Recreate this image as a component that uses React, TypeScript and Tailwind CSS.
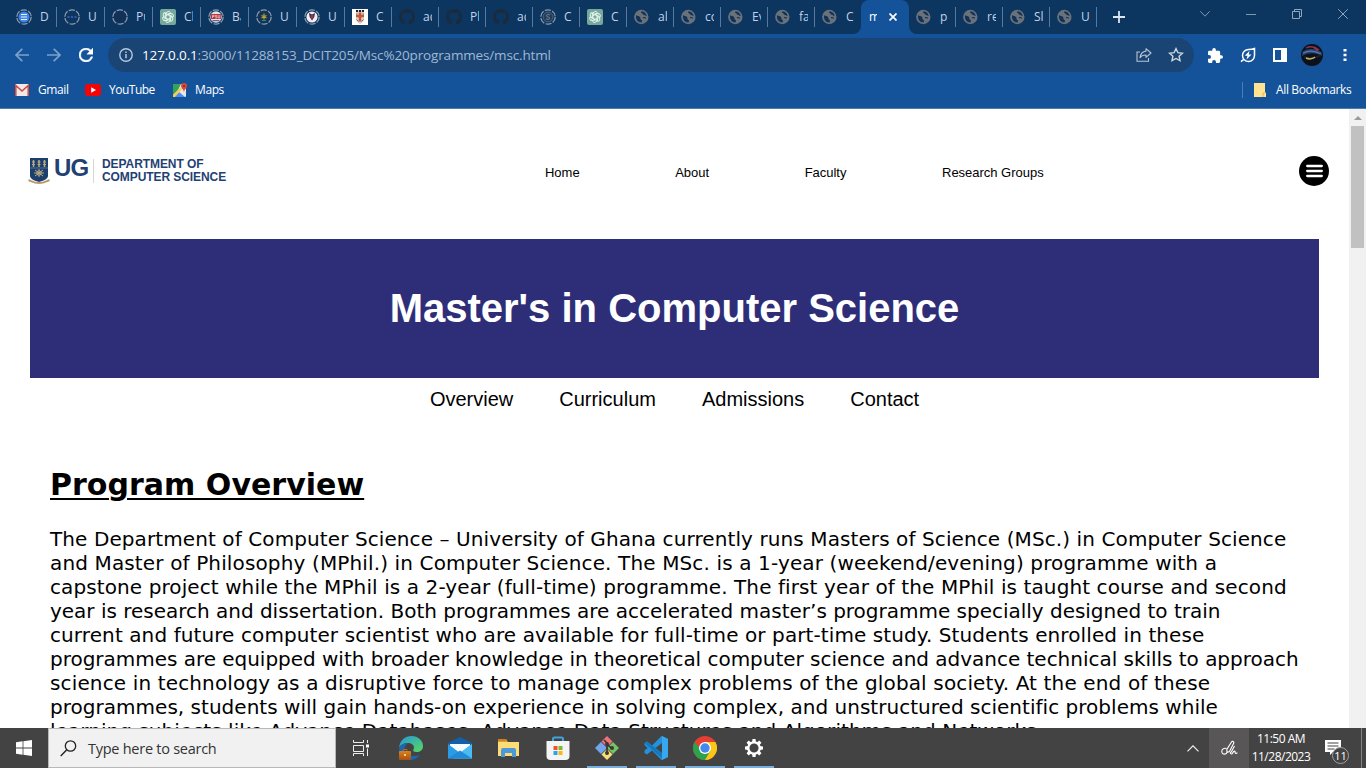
import React from 'react';

type IconKind = 'doc' | 'dots' | 'ring' | 'gpt' | 'psu' | 'crest' | 'bird' | 'shield' | 'github' | 'coin' | 'globe';

const Ring = () => (
  <circle cx="8" cy="8" r="7.2" fill="none" stroke="#8d9cad" strokeWidth="1.3" strokeDasharray="6.2 1.4" />
);

function TabIcon({ kind }: { kind: IconKind }) {
  return (
    <svg viewBox="0 0 16 16" className="h-4 w-4 shrink-0">
      {kind === 'doc' && (
        <g>
          <Ring />
          <circle cx="8" cy="8" r="5.5" fill="#3f86e8" />
          <path d="M5 5.500h6M5 8h6M5 10.500h6" stroke="#e8f1ff" strokeWidth="1.200" />
        </g>
      )}
      {kind === 'dots' && (
        <g>
          <Ring />
          <path d="M3.5 8h2M7 8h2M10.5 8h2" stroke="#3f67c4" strokeWidth="1.6" />
        </g>
      )}
      {kind === 'ring' && (
        <g>
          <circle cx="8" cy="8" r="6" fill="#123157" />
          <Ring />
        </g>
      )}
      {kind === 'gpt' && (
        <g>
          <rect width="16" height="16" rx="2" fill="#75a99c" />
          <g fill="none" stroke="#e6f5ef" strokeWidth="0.9">
            {[0, 60, 120, 180, 240, 300].map((a) => (
              <path key={a} transform={`rotate(${a} 8 8)`} d="M6 8.9V4.9a2.5 2.5 0 0 1 4.6-1.3M6 6.1l3.6-2.1 2 1.2" />
            ))}
          </g>
        </g>
      )}
      {kind === 'psu' && (
        <g>
          <circle cx="8" cy="8" r="5.8" fill="#dfe3ea" />
          <rect x="2.8" y="5" width="10.4" height="5" rx="1" fill="#b3303c" />
          <path d="M4.5 9V6.300h1.500v1.300H4.600M9 6.400H7.300v1.200h1.500V9H7.100M10.200 6v3h1.600V6" fill="none" stroke="#f5d5d8" strokeWidth="0.7" />
          <path d="M4.5 11.7h7" stroke="#3c4f76" strokeWidth="1" />
          <Ring />
        </g>
      )}
      {kind === 'crest' && (
        <g>
          <circle cx="8" cy="8" r="6" fill="#153455" />
          <path d="M8 4.500v6M5.500 6.500l5 2.500M10.500 6.500l-5 2.500" stroke="#b4a23e" strokeWidth="1.200" />
          <path d="M6 11.500h4" stroke="#3b8e62" strokeWidth="1" />
          <Ring />
        </g>
      )}
      {kind === 'bird' && (
        <g>
          <circle cx="8" cy="8" r="5.6" fill="#edf0f4" />
          <path d="M5 4l3 1.6L11 4l-.7 4L8 11.6 5.7 8z" fill="#26314f" />
          <path d="M6.6 6.4L9.4 5v4.2L7 10z" fill="#b62c3b" />
          <Ring />
        </g>
      )}
      {kind === 'shield' && (
        <g>
          <rect width="16" height="16" fill="#fff" />
          <path d="M4 1h8v9c0 2.500-2 4-4 5-2-1-4-2.500-4-5z" fill="#d9d4d0" />
          <path d="M4 1h2v2H4zM7 1h2v2H7zM10 1h2v2h-2z" fill="#1f2027" />
          <path d="M8 3.500v9M4 7h8" stroke="#c9562f" strokeWidth="2.600" />
          <path d="M4 5h1.500M10.500 5H12M4.500 10.500l2 2M11.500 10.500l-2 2" stroke="#6a6a74" strokeWidth="1" />
        </g>
      )}
      {kind === 'github' && (
        <path fill="#1b2b3e" d="M8 0C3.580 0 0 3.580 0 8c0 3.540 2.290 6.530 5.470 7.590.4.070.550-.170.550-.380v-1.490c-2.230.480-2.690-.950-2.690-.950-.360-.920-.890-1.170-.890-1.170-.730-.500.060-.490.060-.490.800.060 1.230.820 1.230.820.720 1.230 1.870.870 2.330.670.070-.520.280-.870.510-1.070-1.780-.200-3.640-.890-3.640-3.950 0-.870.310-1.590.820-2.150-.080-.200-.360-1.020.080-2.120 0 0 .670-.210 2.200.820a7.700 7.700 0 0 1 4 0c1.530-1.040 2.200-.820 2.200-.820.440 1.100.160 1.920.080 2.120.510.560.820 1.270.820 2.150 0 3.070-1.870 3.750-3.650 3.950.290.250.540.730.540 1.480v2.200c0 .210.150.460.550.380A8 8 0 0 0 16 8c0-4.420-3.580-8-8-8z" />
      )}
      {kind === 'coin' && (
        <g>
          <Ring />
          <circle cx="8" cy="8" r="4.900" fill="#243c59" stroke="#52687f" strokeWidth="0.900" />
          <path d="M10 6.200c-.700-1-3.600-1-3.600.600 0 1.500 3.300.800 3.300 2.400 0 1.600-3.100 1.400-3.800.300" fill="none" stroke="#6f8396" strokeWidth="1" />
        </g>
      )}
      {kind === 'globe' && (
        <g>
          <circle cx="7.300" cy="8" r="7.200" fill="#69727b" />
          <path d="M2 6.300c1.500 1 2.800.300 4 1.600 1 1-.200 2 .900 2.700 1.400.800 1.200 1.700.600 2.800-3.200.200-5.500-2.300-5.500-5.300zM7.700 2.200c-1 .900-.800 1.800.300 2 1.100.300.500 1.500 1.700 1.600 1.300.100 1.500 1.200 3 1.200-.400-2.500-2.400-4.600-5-4.800z" fill="#133257" />
          <path d="M9 8.700c1.300-.600 2 .500 3 .300" fill="none" stroke="#133257" strokeWidth="1.200" />
        </g>
      )}
    </svg>
  );
}

const leftTabs: [IconKind, string][] = [
  ['doc', 'D'], ['dots', 'U'], ['ring', 'Pu'], ['gpt', 'Cl'], ['psu', 'Ba'], ['crest', 'U'], ['bird', 'U'],
];
const midTabs: [IconKind, string][] = [
  ['shield', 'C'], ['github', 'ad'], ['github', 'Pl'], ['github', 'ad'], ['coin', 'C'], ['gpt', 'C'],
  ['globe', 'al'], ['globe', 'co'], ['globe', 'Ev'], ['globe', 'fa'], ['globe', 'C'],
];
const rightTabs: [IconKind, string][] = [['globe', 'p'], ['globe', 're'], ['globe', 'Sl'], ['globe', 'U']];

function Tab({ kind, label, wide, first }: { kind: IconKind; label: string; wide?: boolean; first?: boolean }) {
  return (
    <div className={`${wide ? 'w-12' : 'w-[47px]'} flex h-[34px] shrink-0 items-center`}>
      <div className={`h-5 w-px shrink-0 ${first ? '' : 'bg-[#56799d]'}`} />
      <div className="ml-[7px] flex items-center gap-2">
        <TabIcon kind={kind} />
        <span className="w-[9px] overflow-hidden whitespace-nowrap text-[12px] leading-4 text-[#c3d3e6]">{label}</span>
      </div>
    </div>
  );
}

function TabStrip() {
  return (
    <div className="flex h-[34px] shrink-0 bg-[#0c3560] pl-2">
      {leftTabs.map(([k, l], i) => <Tab key={i} kind={k} label={l} wide first={i === 0} />)}
      {midTabs.map(([k, l], i) => <Tab key={i} kind={k} label={l} />)}
      <div className="relative -mr-px flex h-[34px] w-12 shrink-0 items-center rounded-t-lg bg-[#14539a] pl-2">
        <span className="w-[8px] overflow-hidden whitespace-nowrap text-[12px] leading-4 text-white">ms</span>
        <svg viewBox="0 0 8 8" className="ml-3 h-2 w-2"><path d="M.5.5l7 7M7.500.5l-7 7" stroke="#fff" strokeWidth="1.700" /></svg>
        <svg viewBox="0 0 8 8" className="absolute bottom-0 -left-2 h-2 w-2"><path d="M8 0v8H0a8 8 0 0 0 8-8z" fill="#14539a" /></svg>
        <svg viewBox="0 0 8 8" className="absolute -right-2 bottom-0 h-2 w-2"><path d="M0 0v8h8a8 8 0 0 1-8-8z" fill="#14539a" /></svg>
      </div>
      {rightTabs.map(([k, l], i) => <Tab key={i} kind={k} label={l} first={i === 0} />)}
      <div className="mt-[7px] h-5 w-px bg-[#56799d]" />
      <svg viewBox="0 0 12 12" className="mt-[11px] ml-4 h-3 w-3"><path d="M6 0v12M0 6h12" stroke="#dbe6f1" strokeWidth="1.800" /></svg>
      <div className="ml-auto flex h-7 items-center pr-[18px]">
        <svg viewBox="0 0 10 6" className="mr-[36px] h-1.5 w-2.5"><path d="M.3.3L5 5.200 9.700.3" fill="none" stroke="#7f98b2" /></svg>
        <svg viewBox="0 0 10 10" className="mr-[36px] h-2.5 w-2.5"><path d="M0 5.500h10" stroke="#7f98b2" /></svg>
        <svg viewBox="0 0 10 10" className="mr-[36px] h-2.5 w-2.5"><path d="M.5 2.500h7v7h-7zM2.500 2.500v-2h7v7h-2" fill="none" stroke="#8fa5bb" /></svg>
        <svg viewBox="0 0 10 10" className="h-2.5 w-2.5"><path d="M.2.2l9.600 9.600M9.800.2L.2 9.800" stroke="#8fa5bb" /></svg>
      </div>
    </div>
  );
}

function Toolbar() {
  return (
    <div className="flex h-[42px] shrink-0 items-center pl-[15px]">
      <svg viewBox="0 0 14 14" className="h-3.5 w-3.5"><path d="M14 7H1M7.300.8L1 7l6.300 6.200" fill="none" stroke="#7ba1cb" strokeWidth="1.700" /></svg>
      <svg viewBox="0 0 14 14" className="ml-[18px] h-3.5 w-3.5"><path d="M0 7h13M6.700.8L13 7l-6.300 6.200" fill="none" stroke="#7ba1cb" strokeWidth="1.700" /></svg>
      <svg viewBox="4 4 16 16" className="ml-[18px] h-3.5 w-3.5"><path fill="#fff" stroke="#fff" strokeWidth=".5" d="M17.650 6.350A7.960 7.960 0 0 0 12 4a8 8 0 1 0 7.730 10h-2.080A6 6 0 1 1 12 6c1.660 0 3.140.690 4.220 1.780L13 11h7V4z" /></svg>
      <div className="ml-[15px] flex h-[34px] w-[1086px] items-center rounded-full bg-[#1a4473] pr-[10px] pl-[11px]">
        <svg viewBox="0 0 14 14" className="h-3.5 w-3.5"><circle cx="7" cy="7" r="6.200" fill="none" stroke="#b7c8db" strokeWidth="1.400" /><path d="M7 6v4.300M7 3.600v1.500" stroke="#b7c8db" strokeWidth="1.500" /></svg>
        <span className="ml-[9px] text-[13.5px] tracking-[-0.15px] text-[#9fb9d6]"><span className="text-white">127.0.0.1</span>:3000/11288153_DCIT205/Msc%20programmes/msc.html</span>
        <svg viewBox="0 0 16 16" className="ml-auto h-4 w-4"><path d="M4 5H1v9.300h11.500V11" fill="none" stroke="#b7c5d4" strokeWidth="1.100" /><path d="M10 1.700L15 6l-5 4.300V8c-2.800 0-4.700.700-6 2.700C4.500 7 6.500 4.500 10 4.100z" fill="none" stroke="#b7c5d4" strokeWidth="1.100" strokeLinejoin="round" /></svg>
        <svg viewBox="0 0 16 16" className="ml-4 h-4 w-4"><path d="M8 1.600l1.950 4.100 4.500.500-3.350 3.050.9 4.450L8 11.500l-4 2.200.9-4.450L1.550 6.200l4.500-.5z" fill="none" stroke="#cbd5df" strokeWidth="1.400" /></svg>
      </div>
      <svg viewBox="2 1 21 21" className="ml-[14px] h-[15px] w-[15px]"><path fill="#fff" d="M20.500 11H19V7a2 2 0 0 0-2-2h-4V3.500a2.500 2.500 0 0 0-5 0V5H4a2 2 0 0 0-2 2v3.800h1.500a2.700 2.700 0 0 1 0 5.400H2V20a2 2 0 0 0 2 2h3.800v-1.500a2.700 2.700 0 0 1 5.400 0V22H17a2 2 0 0 0 2-2v-4h1.500a2.500 2.500 0 0 0 0-5z" /></svg>
      <svg viewBox="0 0 16 16" className="ml-[17px] h-4 w-4"><path d="M14.500 1.500v7a6 6 0 1 1-6-6c2.500 0 4-.2 6-1zM1 14.700l2.500-2" fill="none" stroke="#fff" strokeWidth="1.500" /><path d="M9.500 3.800L4.800 8.700h2.700l-1 3.800L11.500 7.400H8.700z" fill="#fff" /></svg>
      <svg viewBox="0 0 14 14" className="ml-[17px] h-3.5 w-3.5"><path d="M0 0h14v14H0zM2 2v10h6V2z" fill="#fff" fillRule="evenodd" /></svg>
      <svg viewBox="0 0 22 22" className="ml-[14px] h-[22px] w-[22px]">
        <circle cx="11" cy="11" r="11" fill="#0d1119" />
        <path d="M1.500 8c4-4 12-4 19 0l.5 4c-6-3-12-4-20 0z" fill="#27446f" />
        <path d="M5 4c4-2 8-2 13 2M12 3l5 4" stroke="#8f3350" fill="none" strokeWidth="1.300" />
        <path d="M2 9c6-3 11-3 18 1" fill="none" stroke="#4d78b8" strokeWidth="1.200" />
        <path d="M3 13c5 2 12 1 17-2" fill="none" stroke="#1c2230" strokeWidth="2" />
        <path d="M5 14c3 1.500 7 1 9-1" fill="none" stroke="#b8b46a" strokeWidth="1.500" />
      </svg>
      <svg viewBox="0 0 4 14" className="ml-[20px] h-3.5 w-1"><path d="M.5 1h3v2.500h-3zM.5 5.800h3v2.500h-3zM.5 10.600h3v2.500h-3z" fill="#fff" /></svg>
    </div>
  );
}

function Bookmarks() {
  return (
    <div className="flex h-8 shrink-0 items-center pr-[15px] pb-1 pl-[15px] text-[12px] text-white">
      <svg viewBox="0 0 14 12" className="h-3 w-3.5"><rect width="14" height="12" rx="1" fill="#f1e9e8" /><path d="M.8 12V1.500L7 7l6.200-5.500V12" fill="none" stroke="#d0463e" strokeWidth="1.500" /></svg>
      <span className="ml-[9px] w-[31px] whitespace-nowrap tracking-[-0.400px]">Gmail</span>
      <svg viewBox="0 0 16 12" className="ml-4 h-3 w-4"><rect width="16" height="12" rx="3" fill="#f40407" /><path d="M6.200 3.300v5.400L11 6z" fill="#fff" /></svg>
      <span className="ml-2 w-[46px] whitespace-nowrap tracking-[-0.500px]">YouTube</span>
      <svg viewBox="0 0 14 14" className="ml-[18px] h-3.5 w-3.5"><rect y="1" width="13" height="13" rx="1" fill="#e6e8e7" /><path d="M0 1h8L5 7l-5 5z" fill="#34a259" /><path d="M1 14l5-5 6 5z" fill="#4c8bef" /><path d="M0 12L8 4l1 2-7 8H0z" fill="#f4cc52" /><path d="M11 0a3 3 0 0 0-3 3c0 2 2.500 3 3 6 .5-3 3-4 3-6a3 3 0 0 0-3-3z" fill="#e24538" /><circle cx="11" cy="3" r="1" fill="#862620" /></svg>
      <span className="ml-[8px] tracking-[-0.400px] whitespace-nowrap">Maps</span>
      <div className="ml-auto h-4 w-px bg-[#4b7eb5]" />
      <svg viewBox="0 0 12 14" className="ml-[11px] h-3.5 w-3"><path d="M0 0h11v9l1 1v4H0z" fill="#ffe391" /><path d="M9 14v-4h2" fill="none" stroke="#dfb957" /></svg>
      <span className="ml-[10px] w-[75px] whitespace-nowrap tracking-[-0.360px]">All Bookmarks</span>
    </div>
  );
}

const lines: [string, string][] = [
  ['The Department of Computer Science – University of Ghana currently runs Masters of Science (MSc.) in Computer Science', 'tracking-[0.095px]'],
  ['and Master of Philosophy (MPhil.) in Computer Science. The MSc. is a 1-year (weekend/evening) programme with a', 'tracking-[0.135px]'],
  ['capstone project while the MPhil is a 2-year (full-time) programme. The first year of the MPhil is taught course and second', 'tracking-[0.095px]'],
  ['year is research and dissertation. Both programmes are accelerated master’s programme specially designed to train', 'tracking-[-0.013px]'],
  ['current and future computer scientist who are available for full-time or part-time study. Students enrolled in these', 'tracking-[0.095px]'],
  ['programmes are equipped with broader knowledge in theoretical computer science and advance technical skills to approach', 'tracking-[-0.025px]'],
  ['science in technology as a disruptive force to manage complex problems of the global society. At the end of these', 'tracking-[0.140px]'],
  ['programmes, students will gain hands-on experience in solving complex, and unstructured scientific problems while', 'tracking-[0.025px]'],
  ['learning subjects like Advance Databases, Advance Data Structures and Algorithms and Networks.', 'tracking-[0.050px]'],
];

function Logo() {
  return (
    <div className="flex h-[30px] items-center font-['Liberation_Sans'] font-bold text-[#1f4173]">
      <svg viewBox="0 0 22 28" className="h-7 w-[22px]">
        <path d="M2 1h18v18c0 3-5 5-9 6-4-1-9-3-9-6z" fill="#1d3f6d" />
        <path d="M5.500 3v7M11 3v7M16.500 3v7" stroke="#b6a982" strokeWidth="1.500" />
        <path d="M4 5h3M9.500 5h3M15 5h3M4 7.500h3M9.500 7.500h3M15 7.500h3" stroke="#b6a982" strokeWidth="1.200" />
        <path d="M2 11h18" stroke="#8292a1" strokeWidth=".6" />
        <path d="M7 13l8 6M15 13l-8 6M11 12v8M6 16h10" stroke="#b6a982" strokeWidth="1" />
        <circle cx="11" cy="16" r="2.200" fill="none" stroke="#b6a982" />
        <path d="M.5 23c3 1 5 3 10.500 3s7.500-2 10.500-3" fill="none" stroke="#b99c6c" strokeWidth="2" />
      </svg>
      <span className="ml-[4px] w-[35px] text-[24px] leading-7 tracking-[-0.800px]"><span className="relative -top-[3px]">UG</span></span>
      <div className="ml-[4px] h-6 w-px bg-[#dcd7cd]" />
      <div className="ml-2 text-[12px] leading-[13px] whitespace-nowrap">
        <div className="tracking-[-0.080px]">DEPARTMENT OF</div>
        <div className="tracking-[-0.080px]">COMPUTER SCIENCE</div>
      </div>
    </div>
  );
}

function Page() {
  return (
    <div className="flex min-h-0 flex-1 bg-white text-black">
      <main className="flex min-w-0 flex-1 flex-col overflow-hidden font-['Liberation_Sans']">
        <header className="flex h-[130px] shrink-0 items-start pt-[47px] pl-7">
          <div className="w-[517px]"><Logo /></div>
          <nav className="mt-[9px] flex gap-[95.6px] text-[13px] leading-4 tracking-[-0.020px]">
            <span>Home</span><span>About</span><span>Faculty</span><span>Research Groups</span>
          </nav>
          <svg viewBox="0 0 30 30" className="mr-5 ml-auto h-[30px] w-[30px]">
            <circle cx="15" cy="15" r="15" />
            <path d="M8.200 10h14.600M8.200 15h14.600M8.200 20h14.600" stroke="#fff" strokeWidth="2.300" strokeLinecap="round" />
          </svg>
        </header>
        <section className="mr-[30px] ml-[30px] flex h-[139px] shrink-0 items-center justify-center bg-[#2e2e78] pb-[2px]">
          <h1 className="text-[40px] leading-[46px] font-bold text-white">Master's in Computer Science</h1>
        </section>
        <nav className="mt-[9px] flex h-6 shrink-0 justify-center gap-[46px] text-[20px] leading-6">
          <span>Overview</span><span>Curriculum</span><span>Admissions</span><span>Contact</span>
        </nav>
        <article className="pl-[50px] font-['DejaVu_Sans']">
          <h2 className="mt-[56px] text-[30px] leading-9 font-bold tracking-[0.030px] underline decoration-2 underline-offset-[3px]">Program Overview</h2>
          <div className="mt-[24px] text-[20px] leading-6 whitespace-nowrap">
            {lines.map(([text, tracking]) => <div key={text} className={tracking}>{text}</div>)}
          </div>
        </article>
      </main>
      <div className="flex w-[17px] shrink-0 flex-col items-center bg-[#f1f1f1]">
        <svg viewBox="0 0 8 4" className="mt-[7px] h-1 w-2"><path d="M0 4l4-4 4 4z" fill="#9b9b9b" /></svg>
        <div className="mt-[6px] h-[122px] w-[13px] bg-[#c1c1c1]" />
      </div>
    </div>
  );
}

function AppSlot({ children, open }: { children: React.ReactNode; open?: boolean }) {
  return (
    <div className="flex h-10 w-[49px] shrink-0 flex-col items-center">
      <svg viewBox="0 0 24 24" className="mt-2 h-6 w-6">{children}</svg>
      {open && <div className="mt-auto h-[2px] w-10 bg-[#76b0e3]" />}
    </div>
  );
}

function Taskbar() {
  return (
    <footer className="flex h-10 shrink-0 bg-[#444343] text-white">
      <div className="flex w-12 items-center justify-center">
        <svg viewBox="0 0 16 16" className="h-4 w-4"><path d="M0 2.200l6.600-.9v6.300H0zM7.400 1.200L16 0v7.600H7.400zM0 8.400h6.600v6.300L0 13.800zM7.400 8.400H16V16l-8.600-1.200z" fill="#fff" /></svg>
      </div>
      <div className="flex h-10 w-72 items-center border border-[#b8b8b8] bg-[#f1f1f1] pl-[11px] text-[#333]">
        <svg viewBox="0 0 17 17" className="h-[17px] w-[17px]"><circle cx="10.500" cy="6" r="5.200" fill="none" stroke="#222" strokeWidth="1.300" /><path d="M6.800 9.800L.7 16" stroke="#222" strokeWidth="1.400" /></svg>
        <span className="mt-px ml-[11px] text-[14.500px] tracking-[-0.260px]">Type here to search</span>
      </div>
      <div className="flex w-[49px] items-center justify-center">
        <svg viewBox="0 0 16 16" className="h-4 w-4"><path d="M.5 0v2.500h10V0M.5 5.500h10v6H.5zM.5 16v-2.500h10V16M14.500 0v3M14.500 8.500V16" fill="none" stroke="#eee" /><path d="M13 4.500h3v3h-3z" fill="#fff" /></svg>
      </div>
      <div className="w-px" />
      <AppSlot>
        <defs>
          <linearGradient id="edge" x1="0" y1="0" x2="1" y2="1"><stop offset="0" stopColor="#2898da" /><stop offset="1" stopColor="#57d95c" /></linearGradient>
          <linearGradient id="brief" x1="0" y1="0" x2="0" y2="1"><stop offset="0" stopColor="#db8120" /><stop offset="1" stopColor="#a75010" /></linearGradient>
        </defs>
        <path d="M0 12C1 4 6 0 12.500 0 19 0 24 4.500 24 10c0 4-3 6-6.500 6-3 0-4-1.200-3-2.700C16 11 14 7 9.500 7 5 7 1 9 0 12z" fill="url(#edge)" />
        <path d="M0 12c1-3 5-5 9-5-3 2-4 5-3 8 2 5 8 6 15 4-3 4-7 5-10 5C4 24 0 18 0 12z" fill="#1767b6" />
        <rect y="15" width="12" height="9" rx="1" fill="url(#brief)" />
        <path d="M4 15v-1.500h4V15" stroke="#bc6418" fill="none" /><path d="M5 18h2v2H5z" fill="#ffd068" />
      </AppSlot>
      <AppSlot>
        <path d="M0 7L12 1l12 6v4H0z" fill="#1260ac" /><path d="M2 8h20v8H2z" fill="#f5fafc" />
        <path d="M0 8l12 9 12-9v14.500H0z" fill="#2a9be5" /><path d="M12 17l12-9v14.500H5z" fill="#49bdf3" /><path d="M0 22.500l12-8 12 8z" fill="#218bd8" />
      </AppSlot>
      <AppSlot>
        <path d="M1 3h8l2 3h11v14H1z" fill="#dba136" /><path d="M1 6h21v14H1z" fill="#fbdc77" />
        <path d="M4 21v-7q0-2 2-2h11q2 0 2 2v7h-4v-4H8v4z" fill="#4c99d8" /><path d="M1 4h8" stroke="#c8851a" strokeWidth="2" />
      </AppSlot>
      <AppSlot>
        <path d="M7 5V3q0-1.500 1.500-1.500h7Q17 1.500 17 3v2" fill="none" stroke="#3ea5da" strokeWidth="2" />
        <path d="M.5 5h23v15q0 4-4 4h-15q-4 0-4-4z" fill="#f4f4f4" />
        <path d="M7.500 10H11.500v4H7.500z" fill="#ee5326" /><path d="M12.500 10h4v4h-4z" fill="#7db928" /><path d="M7.500 15h4v4h-4z" fill="#2ca4e5" /><path d="M12.500 15h4v4h-4z" fill="#fbb614" />
      </AppSlot>
      <AppSlot open>
        <path d="M12 0l5.500 5.500L12 11 6.500 5.500z" fill="#ee7277" /><path d="M6 6l6 6-6 6-6-6z" fill="#73a5ec" /><path d="M18 6l6 6-6 6-6-6z" fill="#76c365" /><path d="M12 13l5.500 5.500L12 24l-5.500-5.500z" fill="#f8df73" />
        <path d="M9 4l3 3v10M12 8l5 5" stroke="#393737" strokeWidth="1.700" fill="none" /><circle cx="12" cy="8" r="2" fill="#393737" /><circle cx="12" cy="17" r="2" fill="#393737" /><circle cx="17" cy="12" r="2" fill="#393737" />
      </AppSlot>
      <AppSlot open>
        <path d="M17.500 0L24 3v18l-6.500 3L8 14.500l-5 4L.5 17v-2.500L3.500 12 .5 9V7L3 5.500l5 4zM18 7l-6.500 5 6.500 5z" fill="#2391dc" fillRule="evenodd" />
        <path d="M18 0l6 3v18l-6 3z" fill="#37a7ef" /><path d="M.5 7L3 5.500 18 17v5.500z" fill="#1479bd" />
      </AppSlot>
      <AppSlot open>
        <circle cx="12" cy="12" r="12" fill="#e53e32" /><path d="M1.600 6A12 12 0 0 0 12 24l5.200-9L12 12H6.800z" fill="#2da14c" /><path d="M22.400 6A12 12 0 0 1 12 24l5.200-9L12 6z" fill="#fbc716" /><circle cx="12" cy="12" r="6" fill="#fff" /><circle cx="12" cy="12" r="4.700" fill="#4389ed" />
      </AppSlot>
      <AppSlot open>
        <circle cx="12" cy="12" r="5.700" fill="none" stroke="#fff" strokeWidth="2.300" />
        {[0, 45, 90, 135, 180, 225, 270, 315].map((a) => <path key={a} d="M10.500 3h3l.4 3.500h-3.800z" fill="#fff" transform={`rotate(${a} 12 12)`} />)}
      </AppSlot>
      <div className="ml-auto flex h-10">
        <div className="flex w-8 items-center justify-center"><svg viewBox="0 0 12 7" className="h-[7px] w-3"><path d="M.5 6.300L6 .8l5.500 5.500" fill="none" stroke="#eee" strokeWidth="1.200" /></svg></div>
        <div className="flex w-10 items-center justify-center bg-[#585656]">
          <svg viewBox="0 0 17 17" className="h-[17px] w-[17px]" fill="none" stroke="#fff" strokeWidth="1.100">
            <path d="M6 12.500L5.800 9.500 10.500 2c.8-1.300 3-.2 2.200 1.300L8.500 11.500zM10 12.500l3.500-6.500" />
            <path d="M5.500 8.500C3 7.500.5 9.500.8 12c.3 2.800 4.200 2.800 5.200.5M9.500 12c-.5 2.500 1.500 2.500 2.300.8.900-2 2.500-2.300 2.300-.4-.1 1.300 1.200 1.300 2.300.3" />
          </svg>
        </div>
        <div className="flex w-16 flex-col items-center pt-[2px] text-[12px] leading-[18px] whitespace-nowrap">
          <span className="tracking-[-0.500px]">11:50 AM</span><span className="tracking-[-0.500px]">11/28/2023</span>
        </div>
        <div className="relative w-12 pt-3 pl-3">
          <svg viewBox="0 0 16 16" className="h-4 w-4"><path d="M0 0h16v12H8l-3 3v-3H0z" fill="#fff" /><path d="M2.500 3h11M2.500 6h11M2.500 9h7" stroke="#444" /></svg>
          <div className="absolute top-[19px] left-[19px] flex h-[17px] w-[17px] items-center justify-center rounded-full border border-[#a1a1a1] bg-[#444343] text-[11px] leading-none">11</div>
        </div>
        <div className="w-[5px] border-l border-[#858585]" />
      </div>
    </footer>
  );
}

export default function App() {
  return (
    <div className="flex h-[768px] w-[1366px] flex-col overflow-hidden bg-[#14539a] font-['Open_Sans',sans-serif]">
      <TabStrip />
      <Toolbar />
      <Bookmarks />
      <div className="h-px shrink-0 bg-[#527ba5]" />
      <Page />
      <Taskbar />
    </div>
  );
}
